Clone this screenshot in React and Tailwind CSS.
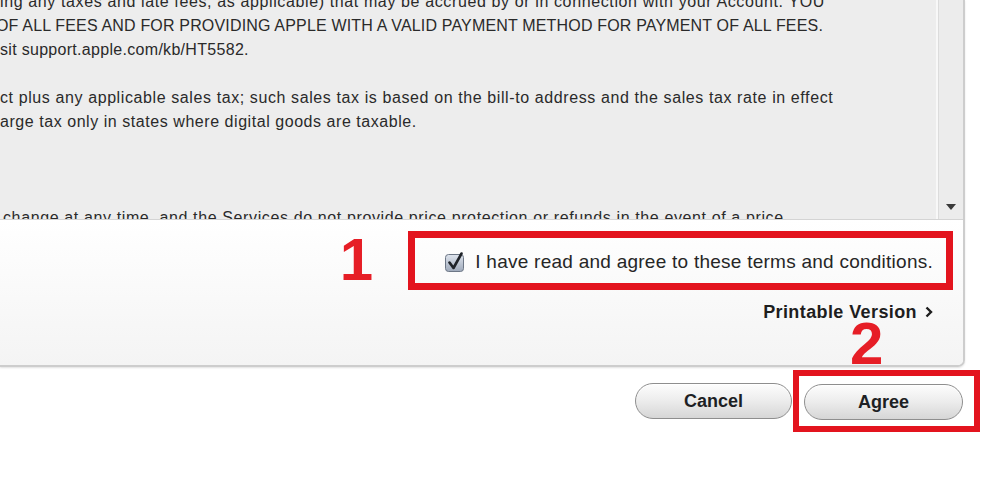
import React from "react";

// ─── Terms text (scrolled excerpt) ───────────────────────────────────────
const TERMS_LINES = [
    { text: "ing any taxes and late fees, as applicable) that may be accrued by or in connection with your Account. YOU", cls: "tracking-[0.62px]" },
    { text: "OF ALL FEES AND FOR PROVIDING APPLE WITH A VALID PAYMENT METHOD FOR PAYMENT OF ALL FEES.", cls: "-ml-[4px] tracking-[0.17px]" },
    { text: "sit support.apple.com/kb/HT5582.", cls: "tracking-[0.3px]" },
    { text: "", cls: "" },
    { text: "ct plus any applicable sales tax; such sales tax is based on the bill-to address and the sales tax rate in effect", cls: "tracking-[0.6px]" },
    { text: "arge tax only in states where digital goods are taxable.", cls: "tracking-[0.55px]" },
    { text: "", cls: "" },
    { text: "", cls: "" },
    { text: "", cls: "" },
    { text: "change at any time, and the Services do not provide price protection or refunds in the event of a price", cls: "ml-[3px] tracking-[0.62px]" },
];

const CheckBox = () => (
    <svg width="22" height="22" viewBox="0 0 22 22" className="shrink-0">
        <defs>
            <linearGradient id="cb" x1="0" y1="0" x2="0" y2="1">
                <stop offset="0" stopColor="#dfe5ee" />
                <stop offset="1" stopColor="#9ea9ba" />
            </linearGradient>
        </defs>
        <rect x="1.5" y="3.5" width="18" height="17" rx="3" fill="url(#cb)" stroke="#6d7786" />
        <path d="M5.5 11.5 L9.5 17 L17.5 2.5" fill="none" stroke="#1f2329" strokeWidth="2.6" strokeLinecap="round" strokeLinejoin="round" />
    </svg>
);

const PillButton = ({ children, className = "" }) => (
    <button
        className={`h-[36px] rounded-full border border-[#8e8e8e] bg-gradient-to-b from-[#fdfdfd] via-[#ececec] to-[#d6d6d6] text-[18px] font-bold text-[#1d1f24] shadow-[inset_0_1px_0_#ffffff] ${className}`}
    >
        {children}
    </button>
);

export default function App() {
    return (
        <div className="relative w-[984px] h-[497px] overflow-hidden bg-white font-['Liberation_Sans',Arial,sans-serif]">
            {/* ── Terms panel ── */}
            <div className="w-[965px] border-r-2 border-b-2 border-[#cdcdcd] rounded-br-[7px] overflow-hidden shadow-[0_1px_2px_rgba(0,0,0,0.12)]">
                <div className="flex h-[220px] border-b border-[#d4d4d4]">
                    <div className="flex-1 overflow-hidden bg-[#ededed] border-r-2 border-[#f8f8f8] text-[16px] leading-[24px] text-[#2a2a2a]">
                        <div className="-mt-[10px]">
                            {TERMS_LINES.map((line, i) => (
                                <div key={i} className={`h-[24px] whitespace-nowrap ${line.cls}`}>
                                    {line.text}
                                </div>
                            ))}
                        </div>
                    </div>
                    <div className="w-[25px] bg-[#ececec] border-l border-[#dcdcdc] flex flex-col justify-end items-center pb-[9px]">
                        <svg width="10" height="6" viewBox="0 0 10 6">
                            <path d="M0 0 H10 L5 6 Z" fill="#3a3a3a" />
                        </svg>
                    </div>
                </div>

                {/* ── Agreement area ── */}
                <div className="h-[145px] bg-gradient-to-b from-white to-[#f4f4f4] pr-[10px] pt-[10px]">
                    <div className="flex items-center justify-end gap-[35px]">
                        <span className="text-[60px] leading-none font-bold text-[#e61e26]">1</span>
                        <div className="w-[545px] h-[59px] border-[7px] border-[#e3141e] flex items-center justify-end gap-[9px] pr-[13px] pt-[4px]">
                            <CheckBox />
                            <span className="text-[19px] tracking-[0.25px] text-[#262626] whitespace-nowrap">
                                I have read and agree to these terms and conditions.
                            </span>
                        </div>
                    </div>
                    <div className="flex justify-end items-center gap-[8px] pr-[20px] mt-[11px] text-[18px] leading-[22px] font-bold tracking-[0.4px] text-[#1e1e1e]">
                        <span>Printable Version</span>
                        <svg width="8" height="12" viewBox="0 0 8 12">
                            <path d="M1.5 1.5 L6 6 L1.5 10.5" fill="none" stroke="#1e1e1e" strokeWidth="2.4" />
                        </svg>
                    </div>
                </div>
            </div>

            {/* ── Annotation "2" over the panel edge ── */}
            <span className="absolute left-[850px] top-[314px] text-[60px] leading-none font-bold text-[#e61e26]">2</span>

            {/* ── Buttons ── */}
            <div className="flex justify-end items-center gap-[1px] pr-[4px] mt-[3px]">
                <PillButton className="w-[157px]">Cancel</PillButton>
                <div className="border-[6px] border-[#e3141e] pl-[5px] pr-[11px] pt-[8px] pb-[6px]">
                    <PillButton className="w-[159px]">Agree</PillButton>
                </div>
            </div>
        </div>
    );
}
